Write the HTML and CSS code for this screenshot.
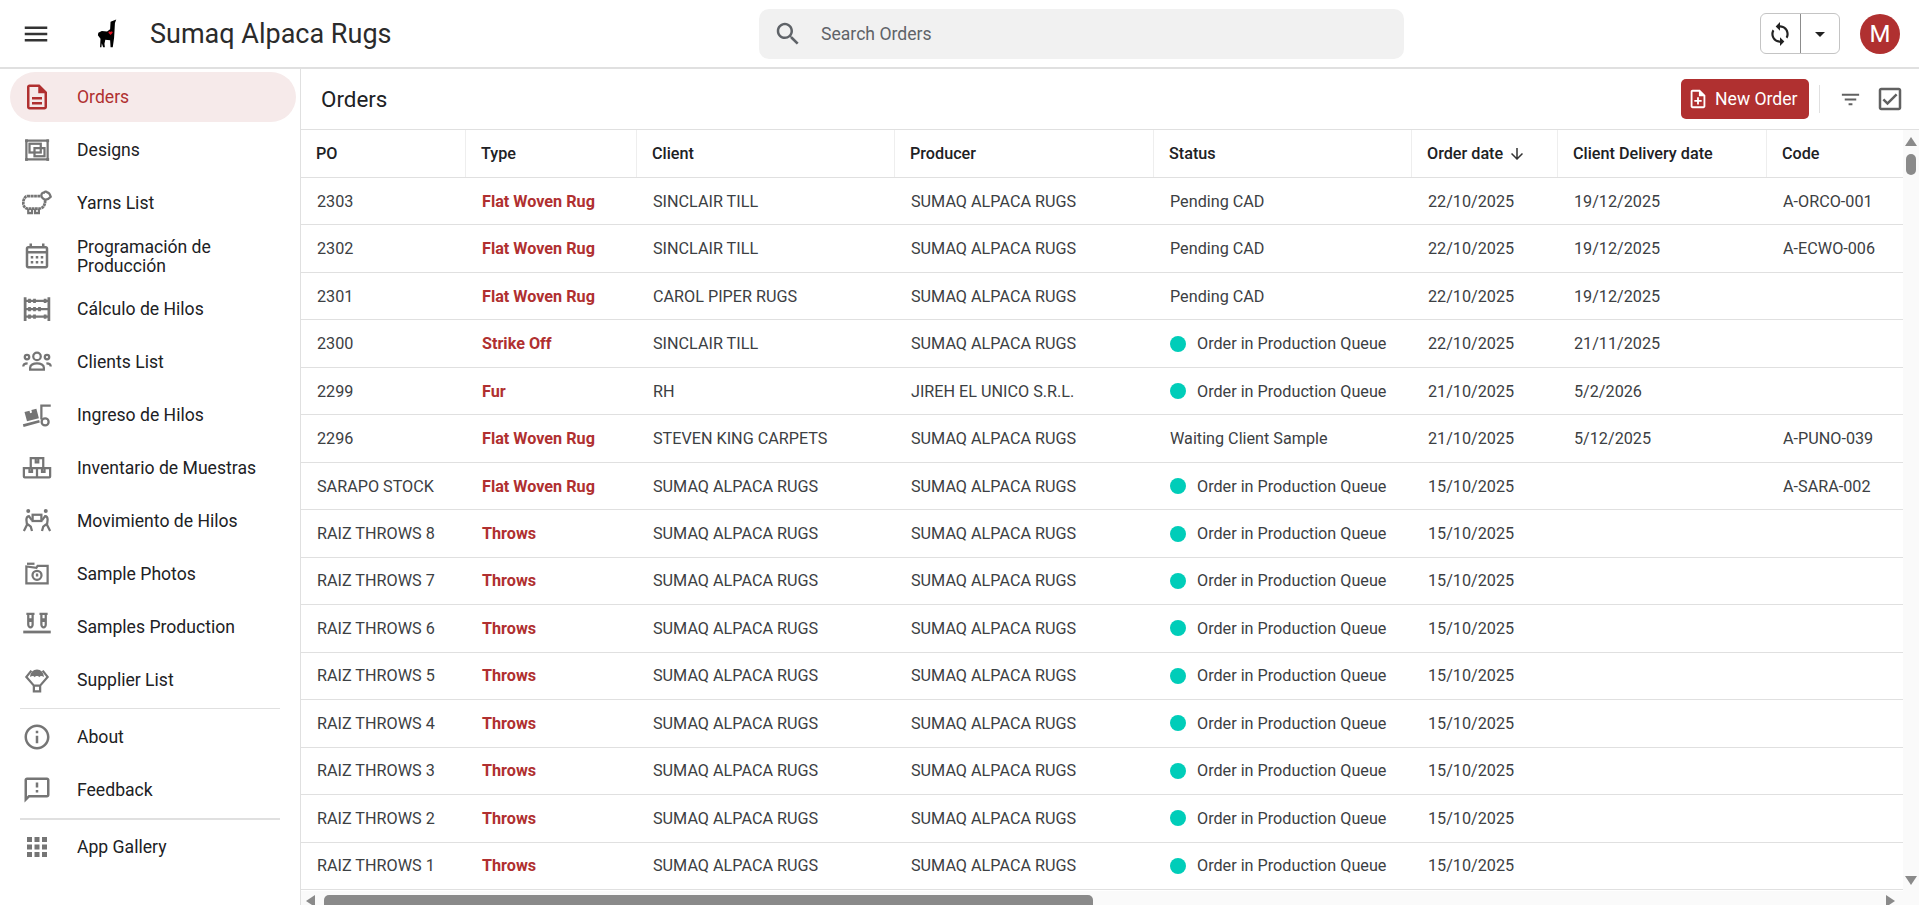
FILE: index.html
```html
<!DOCTYPE html>
<html lang="en">
<head>
  <meta charset="UTF-8" />
  <title>Orders – Sumaq Alpaca Rugs</title>
  <link rel="stylesheet" href="styles.css">
</head>
<body>
  <div class="app">
    <!-- Top bar -->
    <header class="topbar">
      <div class="brand">
        <svg class="menu-icon" viewBox="0 0 24 24"><path d="M3 18h18v-2H3v2zm0-5h18v-2H3v2zm0-7v2h18V6H3z"/></svg>
        <svg class="logo" viewBox="0 0 24 34">
          <path d="M15.500 3l6.500-2.500-1.500 4-.5 9-.5 8-1.500 10.500h-2.500l-.5-8-5.500-.5-1 4.500.5 4H7l-1.500-4.500L5 32H3.500l.5-9.500L1 18.500l.5-3 4-2 6 .5 3.500-2.500z"/>
          <path class="logo-heart" d="M15.500 18l-2.200-2.200c-.8-1.200.9-2.300 2.200-1 1.300-1.300 3-.2 2.200 1z"/>
        </svg>
        <span class="brand-name">Sumaq Alpaca Rugs</span>
      </div>
      <div class="search">
        <svg class="search-icon" viewBox="0 0 24 24"><path d="M15.500 14h-.79l-.28-.27C15.410 12.590 16 11.110 16 9.500 16 5.910 13.090 3 9.500 3S3 5.910 3 9.500 5.910 16 9.500 16c1.610 0 3.090-.59 4.230-1.570l.27.28v.79l5 4.990L20.490 19l-4.990-5zm-6 0C7.010 14 5 11.990 5 9.500S7.010 5 9.500 5 14 7.010 14 9.500 11.990 14 9.500 14z"/></svg>
        <span>Search Orders</span>
      </div>
      <div class="top-actions">
        <div class="split-btn">
          <span class="split-main"><svg viewBox="0 0 24 24"><path d="M12 4V1L8 5l4 4V6c3.310 0 6 2.690 6 6 0 1.010-.25 1.970-.7 2.800l1.460 1.460C19.540 15.030 20 13.570 20 12c0-4.420-3.580-8-8-8zm0 14c-3.310 0-6-2.690-6-6 0-1.010.25-1.970.7-2.800L5.240 7.740C4.460 8.970 4 10.430 4 12c0 4.420 3.580 8 8 8v3l4-4-4-4v3z"/></svg></span>
          <span class="split-drop"><svg viewBox="0 0 24 24"><path d="M7 10l5 5 5-5z"/></svg></span>
        </div>
        <div class="avatar">M</div>
      </div>
    </header>

    <div class="main">
      <!-- Sidebar -->
      <nav class="sidebar">
        <a class="nav-item active">
          <svg class="nav-icon" viewBox="0 0 24 24"><path d="M8 16h8v2H8zm0-4h8v2H8zm6-10H6c-1.100 0-2 .9-2 2v16c0 1.100.89 2 1.990 2H18c1.100 0 2-.9 2-2V8l-6-6zm4 18H6V4h7v5h5v11z"/></svg>
          <span>Orders</span>
        </a>
        <a class="nav-item">
          <svg class="nav-icon line" viewBox="0 0 24 24">
            <rect x="3.500" y="4.500" width="17" height="15"/>
            <rect x="6" y="7" width="9" height="7"/>
            <rect x="10" y="10.500" width="8" height="6.500"/>
            <g class="solid"><rect x="2.500" y="3.500" width="2.200" height="2.200"/><rect x="19.500" y="3.500" width="2.200" height="2.200"/><rect x="2.500" y="18.500" width="2.200" height="2.200"/><rect x="19.500" y="18.500" width="2.200" height="2.200"/></g>
          </svg>
          <span>Designs</span>
        </a>
        <a class="nav-item">
          <svg class="nav-icon line" viewBox="0 0 24 24">
            <path class="thick" d="M4.500 6.500H15c2.500 0 3.500 2 3.500 4 0 3.500-2 6-5 6H5c-2.500 0-4-2-4-4.500 0-3 1.500-5.500 3.500-5.500z" stroke-dasharray="2.200 .4"/>
            <path d="M5 16.500V20h3v-3.500M10.500 16.500V20h3v-3.500"/>
            <path class="sheep-head" d="M15.500 6c0-1.500 1-2.500 2-2.300.5-1 2-1.200 2.700-.2 1 .2 2.300 1.800 2.800 3.500-1 1.200-2.500 2.200-4 2.200-1.500 0-3.500-1.500-3.500-3.200z"/>
          </svg>
          <span>Yarns List</span>
        </a>
        <a class="nav-item">
          <svg class="nav-icon" viewBox="0 0 24 24"><path d="M19 4h-1V2h-2v2H8V2H6v2H5c-1.110 0-2 .9-2 2v14c0 1.100.89 2 2 2h14c1.100 0 2-.9 2-2V6c0-1.100-.9-2-2-2zm0 16H5V10h14v10zm0-12H5V6h14v2zM7 12h2v2H7zm4 0h2v2h-2zm4 0h2v2h-2zm-8 4h2v2H7zm4 0h2v2h-2zm4 0h2v2h-2z"/></svg>
          <span class="nav-two-line">Programación de Producción</span>
        </a>
        <a class="nav-item">
          <svg class="nav-icon line" viewBox="0 0 24 24">
            <path class="thick" d="M2.500 2.500v19M21.500 2.500v19"/>
            <path d="M2.500 5.500h19M2.500 12h19M2.500 18h19"/>
            <path class="thick" d="M6 3.800v3.400M10 3.800v3.400M18.500 3.800v3.400M6 10.300v3.400M10 10.300v3.400M14 10.300v3.400M6 16.300v3.400M10 16.300v3.400M18.500 16.300v3.400"/>
          </svg>
          <span>Cálculo de Hilos</span>
        </a>
        <a class="nav-item">
          <svg class="nav-icon line" viewBox="0 0 24 24">
            <circle cx="12" cy="7.500" r="3"/><circle cx="4" cy="8" r="1.800"/><circle cx="20" cy="8" r="1.800"/>
            <path d="M6.500 18v-1.500c0-2 2.500-3.500 5.500-3.500s5.500 1.500 5.500 3.500V18zM1 15.500c0-1.500 1.500-2.500 3.500-2.500M23 15.500c0-1.500-1.500-2.500-3.500-2.500"/>
          </svg>
          <span>Clients List</span>
        </a>
        <a class="nav-item">
          <svg class="nav-icon line" viewBox="0 0 24 24">
            <path class="thick" d="M1 20.500l13-3.500"/>
            <path d="M23 4.500h-7.500V15.500"/>
            <circle cx="18.500" cy="17.500" r="2.800"/>
            <path class="solid" d="M2 9.500l4-1 .5 2 1.500-.5-.5-2 4-1 2 7.500-9.500 2.500z"/>
          </svg>
          <span>Ingreso de Hilos</span>
        </a>
        <a class="nav-item">
          <svg class="nav-icon line" viewBox="0 0 24 24">
            <path d="M7 12V4h10v8M11 4v3.500h2V4"/>
            <path d="M1.500 12h10.500v7.500H2.200c-.4 0-.7-.3-.7-.7zM12 12h10.500v6.800c0 .4-.3.7-.7.7H12zM6 12v3h2v-3M16 12v3h2v-3"/>
          </svg>
          <span>Inventario de Muestras</span>
        </a>
        <a class="nav-item">
          <svg class="nav-icon line" viewBox="0 0 24 24">
            <rect x="8.500" y="7" width="7" height="5"/>
            <g class="solid"><circle cx="5" cy="4" r="1.600"/><circle cx="19" cy="4" r="1.600"/></g>
            <path d="M8 11.500L5.500 8c-1.500 0-2 1.500-2 3l.5 4-2.500 5M4.500 14.500l2.500 2 1 3.500M16 11.500L18.500 8c1.500 0 2 1.500 2 3l-.5 4 2.500 5M19.500 14.500l-2.500 2-1 3.500"/>
          </svg>
          <span>Movimiento de Hilos</span>
        </a>
        <a class="nav-item">
          <svg class="nav-icon line" viewBox="0 0 24 24">
            <path d="M3.500 6v13.500h17V5.500h-8l-1 1.500z"/>
            <path d="M4 3.800h6"/>
            <circle cx="12" cy="13" r="3.600"/>
            <path d="M12 11.500V13h1"/>
          </svg>
          <span>Sample Photos</span>
        </a>
        <a class="nav-item">
          <svg class="nav-icon line" viewBox="0 0 24 24">
            <path d="M3.500 1.500h6.500M5 1.500v8.500c0 1.200 1 2.300 1.800 2.300s1.700-1.100 1.700-2.300V1.500M14 1.500h6.500M15.500 1.500v8.500c0 1.200 1 2.300 1.800 2.300s1.700-1.100 1.700-2.300V1.500"/>
            <path class="solid" d="M5 5h3.500v3H5zM15.500 5H19v3h-3.500z"/>
            <path class="thick" d="M1 16h22"/>
          </svg>
          <span>Samples Production</span>
        </a>
        <a class="nav-item">
          <svg class="nav-icon line" viewBox="0 0 24 24">
            <path class="solid" d="M6.500 9.500c0-3.500 2.500-6 5.500-6s5.500 2.500 5.500 6c-1.500-1-3-1-3.700.2-.6-.7-1.100-.9-1.800-.9s-1.200.2-1.800.9c-.7-1.200-2.200-1.200-3.700-.2z"/>
            <path d="M7.500 4.500L3.500 9.500l6 7M16.500 4.500l4 5-6 7M9.500 16.500h5v4.500h-5z"/>
          </svg>
          <span>Supplier List</span>
        </a>
        <hr class="nav-divider">
        <a class="nav-item">
          <svg class="nav-icon" viewBox="0 0 24 24"><path d="M11 7h2v2h-2zm0 4h2v6h-2zm1-9C6.480 2 2 6.480 2 12s4.480 10 10 10 10-4.480 10-10S17.520 2 12 2zm0 18c-4.410 0-8-3.590-8-8s3.590-8 8-8 8 3.590 8 8-3.590 8-8 8z"/></svg>
          <span>About</span>
        </a>
        <a class="nav-item">
          <svg class="nav-icon" viewBox="0 0 24 24"><path d="M20 2H4c-1.100 0-1.990.9-1.990 2L2 22l4-4h14c1.100 0 2-.9 2-2V4c0-1.100-.9-2-2-2zm0 14H5.170L4 17.170V4h16v12zm-9-4h2v2h-2zm0-6h2v4h-2z"/></svg>
          <span>Feedback</span>
        </a>
        <hr class="nav-divider thick">
        <a class="nav-item">
          <svg class="nav-icon" viewBox="0 0 24 24"><path d="M4 8h4V4H4v4zm6 12h4v-4h-4v4zm-6 0h4v-4H4v4zm0-6h4v-4H4v4zm6 0h4v-4h-4v4zm6-10v4h4V4h-4zm-6 4h4V4h-4v4zm6 6h4v-4h-4v4zm0 6h4v-4h-4v4z"/></svg>
          <span>App Gallery</span>
        </a>
      </nav>

      <!-- Orders -->
      <section class="content">
        <div class="page-bar">
          <h1 class="page-title">Orders</h1>
          <button class="new-btn">
            <svg viewBox="0 0 24 24"><path d="M14 2H6c-1.100 0-1.990.9-1.990 2L4 20c0 1.100.89 2 1.990 2H18c1.100 0 2-.9 2-2V8l-6-6zm4 18H6V4h7v5h5v11zm-7-2h2v-3h3v-2h-3v-3h-2v3H8v2h3z"/></svg>
            New Order
          </button>
          <span class="bar-sep"></span>
          <svg class="bar-icon filter" viewBox="0 0 24 24"><path d="M10 18h4v-2h-4v2zM3 6v2h18V6H3zm3 7h12v-2H6v2z"/></svg>
          <svg class="bar-icon" viewBox="0 0 24 24"><path d="M19 3H5c-1.100 0-2 .9-2 2v14c0 1.100.9 2 2 2h14c1.100 0 2-.9 2-2V5c0-1.100-.9-2-2-2zm0 16H5V5h14v14z"/><path d="M17.990 9l-1.410-1.420-6.590 6.590-2.580-2.570-1.420 1.410 4 3.990z"/></svg>
        </div>

        <div class="grid-wrap">
          <div class="table-col">
            <div class="orders-table">
              <div class="row head">
                <div class="cell">PO</div>
                <div class="cell">Type</div>
                <div class="cell">Client</div>
                <div class="cell">Producer</div>
                <div class="cell">Status</div>
                <div class="cell">Order date <svg class="sort-icon" viewBox="0 0 24 24"><path d="M20 12l-1.410-1.410L13 16.170V4h-2v12.170l-5.580-5.590L4 12l8 8 8-8z"/></svg></div>
                <div class="cell">Client Delivery date</div>
                <div class="cell">Code</div>
              </div>
              <div class="row"><div class="cell">2303</div><div class="cell type">Flat Woven Rug</div><div class="cell">SINCLAIR TILL</div><div class="cell">SUMAQ ALPACA RUGS</div><div class="cell">Pending CAD</div><div class="cell">22/10/2025</div><div class="cell">19/12/2025</div><div class="cell">A-ORCO-001</div></div>
              <div class="row"><div class="cell">2302</div><div class="cell type">Flat Woven Rug</div><div class="cell">SINCLAIR TILL</div><div class="cell">SUMAQ ALPACA RUGS</div><div class="cell">Pending CAD</div><div class="cell">22/10/2025</div><div class="cell">19/12/2025</div><div class="cell">A-ECWO-006</div></div>
              <div class="row"><div class="cell">2301</div><div class="cell type">Flat Woven Rug</div><div class="cell">CAROL PIPER RUGS</div><div class="cell">SUMAQ ALPACA RUGS</div><div class="cell">Pending CAD</div><div class="cell">22/10/2025</div><div class="cell">19/12/2025</div><div class="cell"></div></div>
              <div class="row"><div class="cell">2300</div><div class="cell type">Strike Off</div><div class="cell">SINCLAIR TILL</div><div class="cell">SUMAQ ALPACA RUGS</div><div class="cell"><i class="dot"></i>Order in Production Queue</div><div class="cell">22/10/2025</div><div class="cell">21/11/2025</div><div class="cell"></div></div>
              <div class="row"><div class="cell">2299</div><div class="cell type">Fur</div><div class="cell">RH</div><div class="cell">JIREH EL UNICO S.R.L.</div><div class="cell"><i class="dot"></i>Order in Production Queue</div><div class="cell">21/10/2025</div><div class="cell">5/2/2026</div><div class="cell"></div></div>
              <div class="row"><div class="cell">2296</div><div class="cell type">Flat Woven Rug</div><div class="cell">STEVEN KING CARPETS</div><div class="cell">SUMAQ ALPACA RUGS</div><div class="cell">Waiting Client Sample</div><div class="cell">21/10/2025</div><div class="cell">5/12/2025</div><div class="cell">A-PUNO-039</div></div>
              <div class="row"><div class="cell">SARAPO STOCK</div><div class="cell type">Flat Woven Rug</div><div class="cell">SUMAQ ALPACA RUGS</div><div class="cell">SUMAQ ALPACA RUGS</div><div class="cell"><i class="dot"></i>Order in Production Queue</div><div class="cell">15/10/2025</div><div class="cell"></div><div class="cell">A-SARA-002</div></div>
              <div class="row"><div class="cell">RAIZ THROWS 8</div><div class="cell type">Throws</div><div class="cell">SUMAQ ALPACA RUGS</div><div class="cell">SUMAQ ALPACA RUGS</div><div class="cell"><i class="dot"></i>Order in Production Queue</div><div class="cell">15/10/2025</div><div class="cell"></div><div class="cell"></div></div>
              <div class="row"><div class="cell">RAIZ THROWS 7</div><div class="cell type">Throws</div><div class="cell">SUMAQ ALPACA RUGS</div><div class="cell">SUMAQ ALPACA RUGS</div><div class="cell"><i class="dot"></i>Order in Production Queue</div><div class="cell">15/10/2025</div><div class="cell"></div><div class="cell"></div></div>
              <div class="row"><div class="cell">RAIZ THROWS 6</div><div class="cell type">Throws</div><div class="cell">SUMAQ ALPACA RUGS</div><div class="cell">SUMAQ ALPACA RUGS</div><div class="cell"><i class="dot"></i>Order in Production Queue</div><div class="cell">15/10/2025</div><div class="cell"></div><div class="cell"></div></div>
              <div class="row"><div class="cell">RAIZ THROWS 5</div><div class="cell type">Throws</div><div class="cell">SUMAQ ALPACA RUGS</div><div class="cell">SUMAQ ALPACA RUGS</div><div class="cell"><i class="dot"></i>Order in Production Queue</div><div class="cell">15/10/2025</div><div class="cell"></div><div class="cell"></div></div>
              <div class="row"><div class="cell">RAIZ THROWS 4</div><div class="cell type">Throws</div><div class="cell">SUMAQ ALPACA RUGS</div><div class="cell">SUMAQ ALPACA RUGS</div><div class="cell"><i class="dot"></i>Order in Production Queue</div><div class="cell">15/10/2025</div><div class="cell"></div><div class="cell"></div></div>
              <div class="row"><div class="cell">RAIZ THROWS 3</div><div class="cell type">Throws</div><div class="cell">SUMAQ ALPACA RUGS</div><div class="cell">SUMAQ ALPACA RUGS</div><div class="cell"><i class="dot"></i>Order in Production Queue</div><div class="cell">15/10/2025</div><div class="cell"></div><div class="cell"></div></div>
              <div class="row"><div class="cell">RAIZ THROWS 2</div><div class="cell type">Throws</div><div class="cell">SUMAQ ALPACA RUGS</div><div class="cell">SUMAQ ALPACA RUGS</div><div class="cell"><i class="dot"></i>Order in Production Queue</div><div class="cell">15/10/2025</div><div class="cell"></div><div class="cell"></div></div>
              <div class="row"><div class="cell">RAIZ THROWS 1</div><div class="cell type">Throws</div><div class="cell">SUMAQ ALPACA RUGS</div><div class="cell">SUMAQ ALPACA RUGS</div><div class="cell"><i class="dot"></i>Order in Production Queue</div><div class="cell">15/10/2025</div><div class="cell"></div><div class="cell"></div></div>
            </div>
            <div class="hscroll">
              <i class="arrow-left"></i>
              <i class="hthumb"></i>
              <i class="arrow-right"></i>
            </div>
          </div>
          <div class="vscroll">
            <i class="arrow-up"></i>
            <i class="vthumb"></i>
            <i class="arrow-down"></i>
          </div>
        </div>
      </section>
    </div>
  </div>
</body>
</html>
```

FILE: styles.css
```css
:root {
  --brand: #b03030;
  --line: #e0e0e0;
  --text: #202124;
  --cell-text: #3c4043;
  --icon: #757575;
  --scroll: #8a8a8a;
}

html, body {
  height: 100%;
  margin: 0;
  padding: 0;
  background: #fff;
  overflow: hidden;
}

body {
  font-family: Roboto, "Liberation Sans", sans-serif;
  color: var(--text);
}

.app {
  height: 905px;
  display: flex;
  flex-direction: column;
}

/* top bar */
.topbar {
  height: 67px;
  flex: none;
  display: flex;
  align-items: center;
  border-bottom: 2px solid var(--line);
}

.brand {
  width: 759px;
  display: flex;
  align-items: center;
}

.menu-icon {
  width: 30px;
  height: 30px;
  margin-left: 21px;
  fill: #333;
}

.logo {
  width: 21px;
  height: 30px;
  margin-left: 46px;
  fill: #000;
}

.logo-heart {
  fill: #e01020;
}

.brand-name {
  margin-left: 32px;
  font-size: 27px;
  color: #2b2b2b;
}

.search {
  width: 645px;
  height: 50px;
  display: flex;
  align-items: center;
  gap: 18px;
  background: #f1f1f1;
  border-radius: 10px;
  font-size: 17.6px;
  color: #5f6368;
}

.search-icon {
  width: 30px;
  height: 30px;
  margin-left: 14px;
  fill: #5f6368;
}

.top-actions {
  margin-left: auto;
  display: flex;
  align-items: center;
  gap: 20px;
  padding-right: 19px;
}

.split-btn {
  width: 78px;
  height: 39px;
  display: flex;
  border: 1px solid #c4c4c4;
  border-radius: 6px;
}

.split-main, .split-drop {
  flex: 1;
  display: flex;
  align-items: center;
  justify-content: center;
}

.split-main {
  border-right: 1px solid #8c8c8c;
}

.split-main svg {
  width: 26px;
  height: 26px;
  fill: #222;
}

.split-drop svg {
  width: 24px;
  height: 24px;
  fill: #222;
}

.avatar {
  width: 40px;
  height: 40px;
  display: flex;
  align-items: center;
  justify-content: center;
  border-radius: 50%;
  background: var(--brand);
  color: #fff;
  font-size: 24px;
}

/* layout */
.main {
  flex: 1;
  display: flex;
  min-height: 0;
}

.sidebar {
  width: 286px;
  flex: none;
  display: flex;
  flex-direction: column;
  gap: 3px;
  padding: 3px 4px 0 10px;
  border-right: 1px solid var(--line);
  font-size: 17.6px;
}

.nav-item {
  height: 50px;
  flex: none;
  display: flex;
  align-items: center;
  gap: 25px;
  padding-left: 12px;
  border-radius: 25px;
}

.nav-item.active {
  background: #f6eaea;
  color: var(--brand);
}

.nav-two-line {
  width: 185px;
  padding-top: 2px;
  line-height: 19px;
}

.nav-icon {
  width: 30px;
  height: 30px;
  flex: none;
  fill: var(--icon);
}

.nav-item.active .nav-icon {
  fill: var(--brand);
}

.nav-icon.line {
  fill: none;
  stroke: var(--icon);
  stroke-width: 1.800;
}

.nav-icon.line .solid {
  fill: var(--icon);
  stroke: none;
}

.nav-icon .thick {
  stroke-width: 2.200;
}

.nav-icon .sheep-head {
  fill: #fff;
}

.nav-divider {
  width: 260px;
  margin: 0 0 0 10px;
  border: 0;
  border-top: 1px solid var(--line);
}

.nav-divider.thick {
  margin-bottom: -1px;
  border-top-width: 2px;
}

.content {
  flex: 1;
  min-width: 0;
  display: flex;
  flex-direction: column;
}

.page-bar {
  height: 60px;
  flex: none;
  display: flex;
  align-items: center;
  border-bottom: 1px solid var(--line);
}

.page-title {
  margin: 0 0 0 20px;
  font-size: 22.4px;
  font-weight: 400;
}

.new-btn {
  margin-left: auto;
  width: 128px;
  height: 40px;
  display: flex;
  align-items: center;
  gap: 6px;
  border: 0;
  border-radius: 5px;
  background: var(--brand);
  color: #fff;
  font-family: inherit;
  font-size: 17.6px;
  padding: 0 0 0 6px;
}

.new-btn svg {
  width: 22px;
  height: 22px;
  fill: #fff;
}

.bar-sep {
  width: 1px;
  height: 28px;
  margin: 0 19px 0 10px;
  background: var(--line);
}

.bar-icon {
  width: 30px;
  height: 30px;
  margin-right: 14px;
  fill: #616161;
}

.bar-icon.filter {
  width: 23px;
  height: 23px;
  margin-right: 13px;
}

/* table */
.grid-wrap {
  flex: 1;
  min-height: 0;
  display: flex;
}

.table-col {
  flex: 1;
  min-width: 0;
  display: flex;
  flex-direction: column;
}

.orders-table {
  flex: 1;
  min-height: 0;
  overflow: hidden;
}

.row {
  height: 47.47px;
  box-sizing: border-box;
  display: grid;
  grid-template-columns: 165px 171px 258px 259px 258px 146px 209px 136px;
  align-items: center;
  border-bottom: 1px solid var(--line);
  font-size: 16.2px;
  color: var(--cell-text);
}

.row.head {
  height: 48px;
  font-weight: 500;
  color: var(--text);
  align-items: stretch;
}

.cell {
  display: flex;
  align-items: center;
  padding-left: 16px;
  white-space: nowrap;
  overflow: hidden;
}

.head .cell {
  padding-left: 15px;
  border-right: 1px solid #eee;
}

.head .cell:last-child {
  border-right: 0;
}

.type {
  color: var(--brand);
  font-weight: 700;
}

.dot {
  width: 16px;
  height: 16px;
  margin-right: 11px;
  border-radius: 50%;
  background: #00cdb9;
  flex: none;
}

.sort-icon {
  width: 18px;
  height: 18px;
  margin-left: 5px;
  fill: #333;
}

/* scrollbars */
.hscroll {
  height: 14px;
  flex: none;
  display: flex;
  align-items: flex-start;
  padding: 4px 8px 0 5px;
  box-sizing: border-box;
  background: #fafafa;
  overflow: hidden;
}

.hthumb {
  width: 769px;
  height: 16px;
  margin-left: 9px;
  border-radius: 5px;
  background: var(--scroll);
  flex: none;
}

.arrow-left, .arrow-right {
  width: 0;
  height: 0;
  border-top: 6px solid transparent;
  border-bottom: 6px solid transparent;
  flex: none;
}

.arrow-left {
  border-right: 9px solid var(--scroll);
}

.arrow-right {
  margin-left: auto;
  border-left: 9px solid var(--scroll);
}

.vscroll {
  width: 16px;
  flex: none;
  display: flex;
  flex-direction: column;
  align-items: center;
  padding: 7px 0 20px;
  box-sizing: border-box;
  background: #fafafa;
}

.vthumb {
  width: 10px;
  height: 21px;
  margin-top: 8px;
  border-radius: 5px;
  background: var(--scroll);
}

.arrow-up, .arrow-down {
  width: 0;
  height: 0;
  border-left: 6px solid transparent;
  border-right: 6px solid transparent;
}

.arrow-up {
  border-bottom: 9px solid var(--scroll);
}

.arrow-down {
  margin-top: auto;
  border-top: 9px solid var(--scroll);
}
```
